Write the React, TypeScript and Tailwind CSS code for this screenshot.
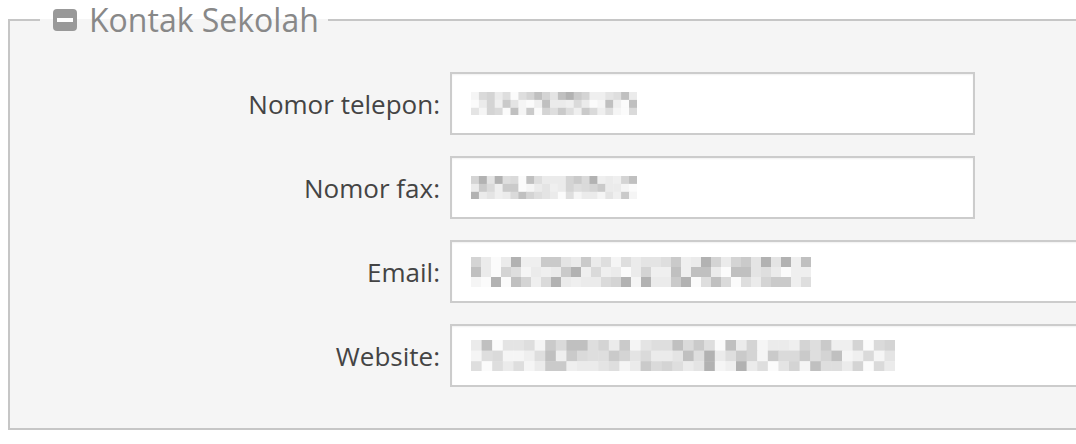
import React from 'react';

interface Field {
  label: string;
  width: string;
  cols: number;
  block: number;
  seed: number;
}

const fields: Field[] = [
  { label: 'Nomor telepon:', width: 'w-[525px]', cols: 21, block: 7.9, seed: 11 },
  { label: 'Nomor fax:', width: 'w-[525px]', cols: 21, block: 7.9, seed: 29 },
  { label: 'Email:', width: 'w-[720px]', cols: 34, block: 10, seed: 53 },
  { label: 'Website:', width: 'w-[720px]', cols: 40, block: 10.6, seed: 97 },
];

const shades = ['#ebebeb', '#dedede', '#d4d4d4', '#efefef', '#cacaca', '#e4e4e4', '#f5f5f5', '#fbfbfb', '#c0c0c0', '#dadada', '#b2b2b2'];

// pixelated (redacted) field value
const Mosaic: React.FC<{ cols: number; block: number; seed: number }> = ({ cols, block, seed }) => {
  let s = seed;
  const rand = () => {
    s = (s * 9301 + 49297) % 233280;
    return s / 233280;
  };
  const rects = [];
  for (let r = 0; r < 3; r++) {
    for (let c = 0; c < cols; c++) {
      const v = rand();
      const fill = shades[Math.floor(Math.pow(v, 1.3) * shades.length)];
      rects.push(<rect key={`${r}-${c}`} x={c * block} y={r * block} width={block + 0.5} height={block + 0.5} fill={fill} />);
    }
  }
  return (
    <svg width={cols * block} height={block * 3} className="block">
      {rects}
    </svg>
  );
};

const MinusSquare = () => (
  <svg width="24" height="22" viewBox="0 0 24 22" className="block shrink-0">
    <rect x="0" y="0" width="24" height="22" rx="4" fill="#999999" />
    <rect x="4" y="9" width="16" height="4" fill="#ffffff" />
  </svg>
);

export default function App() {
  return (
    <div className="w-[1076px] h-[444px] overflow-hidden bg-white font-['Open_Sans',sans-serif]">
      <fieldset className="ml-[8px] w-[1120px] h-[430px] border-2 border-[#c6c6c6] bg-[#f5f5f5] px-0 pt-[32px] pb-[41px]">
        <legend className="ml-[30px] pl-[13px] pr-[9px] flex items-center gap-[12px] h-[40px] text-[32px] leading-[40px] text-[#888888]">
          <MinusSquare />
          <span>Kontak Sekolah</span>
        </legend>
        <div className="flex flex-col gap-[21px]">
          {fields.map((f) => (
            <div key={f.label} className="flex items-center gap-[10px]">
              <label className="w-[430px] text-right text-[26px] leading-[36px] text-[#444444]">{f.label}</label>
              <div
                className={`${f.width} h-[63px] flex items-center pl-[19px] bg-white border-2 border-[#cccccc] shadow-[inset_0_1px_2px_rgba(0,0,0,0.06)]`}
              >
                <Mosaic cols={f.cols} block={f.block} seed={f.seed} />
              </div>
            </div>
          ))}
        </div>
      </fieldset>
    </div>
  );
}
